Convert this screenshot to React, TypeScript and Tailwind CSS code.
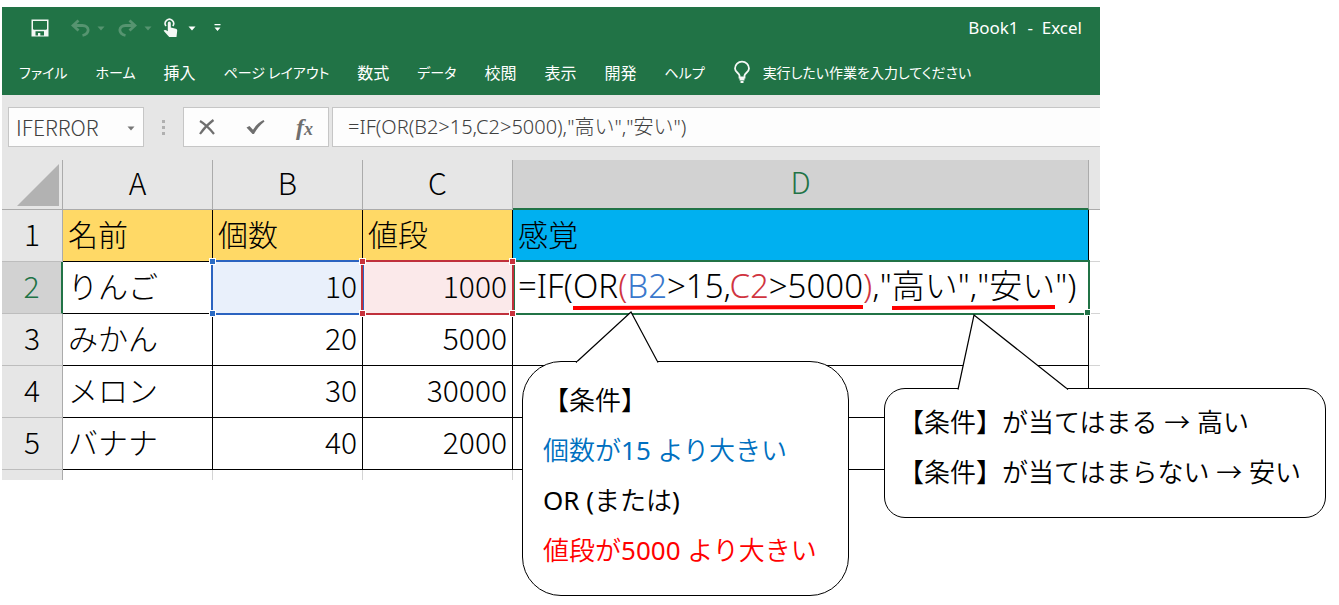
import type { ReactNode } from "react";

const tabs = [
  { label: "ファイル", kana: true },
  { label: "ホーム", kana: true },
  { label: "挿入", kana: false },
  { label: "ページ レイアウト", kana: true },
  { label: "数式", kana: false },
  { label: "データ", kana: true },
  { label: "校閲", kana: false },
  { label: "表示", kana: false },
  { label: "開発", kana: false },
  { label: "ヘルプ", kana: true },
];

const rows = [
  { n: 3, name: "みかん", qty: "20", price: "5000" },
  { n: 4, name: "メロン", qty: "30", price: "30000" },
  { n: 5, name: "バナナ", qty: "40", price: "2000" },
];

function Caret({ className = "" }: { className?: string }) {
  return (
    <svg viewBox="0 0 8 5" className={`h-[5px] w-2 ${className}`} aria-hidden="true">
      <path d="M0.5 0.5h7L4 4.5z" fill="currentColor" />
    </svg>
  );
}

function QuickAccess() {
  return (
    <div className="flex items-center text-white">
      <button aria-label="上書き保存" className="mr-[22px]">
        <svg viewBox="0 0 18 18" className="h-[18px] w-[18px]">
          <path fillRule="evenodd" fill="#f4f8f5" d="M0.500 0.500h17v17H0.500zM2 2v8l0.800 0.800h12.400L16 10V2zM4.500 12.300v4.200H7V14h2.300v2.500H13v-4.200z" />
        </svg>
      </button>
      <button aria-label="元に戻す" className="mr-[7px] text-[#569470]">
        <svg viewBox="0 0 19 18" className="h-[18px] w-[19px]" fill="none" stroke="currentColor" strokeWidth="2.800">
          <path d="M7.500 1.500L2 6.500l5.500 5M3 6.500h8.500c7 0 8 8 0 10" />
        </svg>
      </button>
      <Caret className="mr-[13px] text-[#569470]" />
      <button aria-label="やり直し" className="mr-[7px] text-[#569470]">
        <svg viewBox="0 0 19 18" className="h-[18px] w-[19px]" fill="none" stroke="currentColor" strokeWidth="2.800">
          <path d="M11.500 1.500l5.500 5-5.500 5M16 6.500H7.500c-7 0-8 8 0 10" />
        </svg>
      </button>
      <Caret className="mr-[11px] text-[#569470]" />
      <button aria-label="タッチ/マウス モードの切り替え" className="mr-[10px]">
        <svg viewBox="0 0 15 20" className="h-5 w-[15px]">
          <path d="M3 8A4.200 4.200 0 1 1 9.800 8" fill="none" stroke="#f4f8f5" strokeWidth="1.600" />
          <path fill="#f4f8f5" d="M4.800 4.900a1.500 1.500 0 0 1 3 0V9.500l5 1.300c1 .3 1.500.9 1.400 2L13.500 19H6.200L0.600 12.800c.8-1.200 2-1.100 4.200.4z" />
        </svg>
      </button>
      <Caret className="mr-[18px]" />
      <button aria-label="クイック アクセス ツール バーのユーザー設定">
        <svg viewBox="0 0 7 8" className="h-2 w-[7px]" fill="currentColor">
          <path d="M0.500 0h6v1.300h-6zM0.500 3.500h6L3.500 7z" />
        </svg>
      </button>
    </div>
  );
}

function TitleBar() {
  return (
    <header className="bg-[#217346] font-['Noto_Sans','Noto_Sans_CJK_JP',sans-serif] text-white">
      <div className="flex h-[42px] items-center justify-between pr-[18px] pl-[29px]">
        <QuickAccess />
        <h1 className="text-[17px] whitespace-pre">Book1  -  Excel</h1>
      </div>
      <nav className="flex h-[46px] items-center gap-7 pl-[17px] font-['Noto_Sans_CJK_JP',sans-serif] whitespace-nowrap [font-feature-settings:'palt']">
        {tabs.map((t) => (
          <button key={t.label} className={t.kana ? "text-sm" : "text-base"}>
            {t.label}
          </button>
        ))}
        <button className="flex items-center gap-3 text-sm">
          <svg viewBox="0 0 18 24" className="h-6 w-[18px]" fill="none" stroke="#f4f8f5" strokeWidth="1.800">
            <path d="M6.500 17.500v-2C6 13 2 12 2 8.500a7 6.800 0 0 1 14 0c0 3.500-4 4.500-4.500 7v2zM6.500 19.500h5M7.500 22h3" />
          </svg>
          実行したい作業を入力してください
        </button>
      </nav>
    </header>
  );
}

function FormulaBar() {
  return (
    <div className="flex h-[65px] items-start bg-[#e6e6e6] pt-3 pl-[6px] text-[#404040]">
      <div className="flex h-10 w-[136px] items-center border border-[#c6c6c6] bg-[#fdfdfd] pt-0.5 pr-2 pl-[7px]">
        <input aria-label="名前ボックス" defaultValue="IFERROR" className="w-full min-w-0 bg-transparent text-[21px] font-light outline-none" />
        <button aria-label="名前の一覧" className="text-[#777]">
          <Caret />
        </button>
      </div>
      <div className="mx-[18px] flex h-10 flex-col justify-center gap-[3px]">
        <i className="size-[3px] bg-[#b0b0b0]" />
        <i className="size-[3px] bg-[#b0b0b0]" />
        <i className="size-[3px] bg-[#b0b0b0]" />
      </div>
      <div className="flex h-10 w-[146px] items-center justify-between border border-[#c6c6c6] bg-[#fdfdfd] px-[15px] text-[#6f6f6f]">
        <button aria-label="キャンセル">
          <svg viewBox="0 0 16 16" className="size-4" fill="none" stroke="currentColor" strokeWidth="2.200">
            <path d="M1 2c5 3 10 8 14 13M14.500 1C9 5 5 9 1 15" />
          </svg>
        </button>
        <button aria-label="入力">
          <svg viewBox="0 0 19 16" className="h-4 w-[19px]" fill="currentColor">
            <path d="M0.500 8.500L3.500 7l3.500 3.800C10 6 13.500 3 17.500 1l1 1.500C14 6 10.500 10 8 15H6.500z" />
          </svg>
        </button>
        <button aria-label="関数の挿入" className="flex items-center font-['Liberation_Serif',serif] text-2xl leading-6 font-bold italic">
          <span>f</span>
          <span className="pt-1 text-lg leading-6">x</span>
        </button>
      </div>
      <div className="ml-[3px] flex h-10 min-w-0 flex-1 items-center border-y border-l border-[#c6c6c6] bg-[#fdfdfd] pl-[15px]">
        <input
          aria-label="数式バー"
          defaultValue={'=IF(OR(B2>15,C2>5000),"高い","安い")'}
          className="w-full min-w-0 bg-transparent font-['Noto_Sans','Noto_Sans_CJK_JP',sans-serif] text-[20px] font-light outline-none"
        />
      </div>
    </div>
  );
}

function Frame({ kind }: { kind: "blue" | "red" }) {
  const line = kind === "blue" ? "border-[#2b63c0]" : "border-[#c0303b]";
  const dot = kind === "blue" ? "bg-[#2b6bc4]" : "bg-[#c8323c]";
  return (
    <span className={`pointer-events-none absolute -top-0.5 -right-0.5 -bottom-0.5 -left-0.5 z-10 border-2 ${line}`}>
      <i className={`absolute -top-[4px] -left-[4px] size-[7px] border border-white ${dot}`} />
      <i className={`absolute -top-[4px] -right-[4px] size-[7px] border border-white ${dot}`} />
      <i className={`absolute -bottom-[4px] -left-[4px] size-[7px] border border-white ${dot}`} />
      <i className={`absolute -right-[4px] -bottom-[4px] size-[7px] border border-white ${dot}`} />
    </span>
  );
}

function Underlined({ children }: { children: ReactNode }) {
  return (
    <span className="relative inline-block">
      {children}
      <svg viewBox="0 0 100 6" preserveAspectRatio="none" className="absolute -bottom-[3px] left-0 h-[6px] w-full" aria-hidden="true">
        <path d="M0 2L100 1V5L0 6z" fill="#ff0000" />
      </svg>
    </span>
  );
}

const colHead = "border-r border-b border-[#ababab] font-light";
const rowHead = "border-r border-b border-r-[#ababab] border-b-[#bdbdbd] pb-[6px] font-light";
const cell = "border-r border-b border-black px-[5px] pb-[6px]";

function Sheet() {
  return (
    <table className="w-full table-fixed border-separate border-spacing-0 text-[30px] leading-[42px] font-light whitespace-nowrap text-black">
      <colgroup>
        <col className="w-[61px]" />
        <col className="w-[150px]" />
        <col className="w-[150px]" />
        <col className="w-[150px]" />
        <col />
        <col className="w-[11px]" />
      </colgroup>
      <thead>
        <tr className="h-[50px] bg-[#e6e6e6]">
          <th className={`${colHead} p-0`} aria-label="すべて選択">
            <svg viewBox="0 0 42 42" className="mr-[3px] ml-auto size-[42px]">
              <path d="M42 0V42H0z" fill="#b2b2b2" />
            </svg>
          </th>
          <th className={`${colHead} pb-[6px]`}>A</th>
          <th className={`${colHead} pb-[6px]`}>B</th>
          <th className={`${colHead} pb-[6px]`}>C</th>
          <th className="border-r border-b-2 border-r-[#ababab] border-b-[#217346] bg-[#d2d2d2] pb-[6px] font-light text-[#217346]">D</th>
          <th className="border-b border-[#ababab]" />
        </tr>
      </thead>
      <tbody>
        <tr className="h-[52px]">
          <th className={`${rowHead} bg-[#e6e6e6]`}>1</th>
          <td className={`${cell} bg-[#ffd966]`}>名前</td>
          <td className={`${cell} bg-[#ffd966]`}>個数</td>
          <td className={`${cell} bg-[#ffd966]`}>値段</td>
          <td className={`${cell} bg-[#00b0f0]`}>感覚</td>
          <td className="border-b border-[#d4d4d4]" />
        </tr>
        <tr className="h-[52px]">
          <th className="border-r-2 border-b border-r-[#217346] border-b-[#bdbdbd] bg-[#d2d2d2] pb-[6px] font-light text-[#217346]">2</th>
          <td className={cell}>りんご</td>
          <td className={`${cell} relative bg-[#e9f0fb] text-right`}>
            10
            <Frame kind="blue" />
          </td>
          <td className={`${cell} relative bg-[#fbe9ea] text-right`}>
            1000
            <Frame kind="red" />
          </td>
          <td className="relative border-r border-b border-black px-[5px] pb-1 font-['Noto_Sans','Noto_Sans_CJK_JP',sans-serif] text-[33px]">
            =IF(
            <Underlined>
              OR<span className="text-[#d0343f]">(</span>
              <span className="text-[#3a78cc]">B2</span>&gt;15,<span className="text-[#d0343f]">C2</span>&gt;5000
            </Underlined>
            <span className="text-[#d0343f]">)</span>,"<Underlined>高い","安い</Underlined>")
            <span className="pointer-events-none absolute -top-0.5 -right-0.5 -bottom-0.5 left-0 border-2 border-[#217346]">
              <i className="absolute -right-[3px] -bottom-[3px] size-[7px] border border-white bg-[#217346]" />
            </span>
          </td>
          <td className="border-b border-[#d4d4d4]" />
        </tr>
        {rows.map((r) => (
          <tr key={r.n} className="h-[52px]">
            <th className={`${rowHead} bg-[#e6e6e6]`}>{r.n}</th>
            <td className={cell}>{r.name}</td>
            <td className={`${cell} text-right`}>{r.qty}</td>
            <td className={`${cell} text-right`}>{r.price}</td>
            <td className={cell} />
            <td className="border-b border-[#d4d4d4]" />
          </tr>
        ))}
        <tr className="h-[10px]">
          <th className="border-r border-[#ababab] bg-[#e6e6e6]" />
          <td className="border-r border-[#d4d4d4]" />
          <td className="border-r border-[#d4d4d4]" />
          <td className="border-r border-[#d4d4d4]" />
          <td className="border-r border-[#d4d4d4]" />
          <td />
        </tr>
      </tbody>
    </table>
  );
}

export default function App() {
  return (
    <main className="relative min-h-screen bg-white pt-[7px] pl-0.5 font-['Noto_Sans_CJK_JP',sans-serif]">
      <section className="w-[82%] min-w-[1098px]">
        <TitleBar />
        <FormulaBar />
        <Sheet />
      </section>

      <aside className="absolute top-[361px] left-[522px] z-20 rounded-[39px] border border-black bg-white pt-[13px] pr-[31px] pb-5 pl-5 font-['Noto_Sans','Noto_Sans_CJK_JP',sans-serif] text-[26px] leading-[50px] font-[350] whitespace-nowrap">
        <svg viewBox="0 0 84 52" className="absolute -top-[51px] left-[52px] h-[52px] w-[84px]" aria-hidden="true">
          <path d="M1 51.500L56 1L83 51.500" fill="#fff" stroke="#000" strokeWidth="1.200" />
          <path d="M2 51.500H82" stroke="#fff" strokeWidth="1.400" />
        </svg>
        <p>【条件】</p>
        <p className="text-[#0070c0]">
          個数が<span className="font-normal">15 </span>より大きい
        </p>
        <p>
          <span className="font-normal">OR (</span>または<span className="font-normal">)</span>
        </p>
        <p className="text-[#ff0000]">
          値段が<span className="font-normal">5000 </span>より大きい
        </p>
      </aside>

      <aside className="absolute top-[388px] left-[884px] z-20 rounded-[21px] border border-black bg-white pt-2 pr-6 pb-5 pl-[13px] font-['Noto_Sans','Noto_Sans_CJK_JP',sans-serif] text-[26px] leading-[50px] font-[350] whitespace-nowrap">
        <svg viewBox="0 0 112 76" className="absolute -top-[75px] left-[72px] h-[76px] w-28" aria-hidden="true">
          <path d="M1 75.500L17 1L111 75.500" fill="#fff" stroke="#000" strokeWidth="1.200" />
          <path d="M2 75.500H109.500" stroke="#fff" strokeWidth="1.400" />
        </svg>
        <p>【条件】が当てはまる → 高い</p>
        <p>【条件】が当てはまらない → 安い</p>
      </aside>
    </main>
  );
}
